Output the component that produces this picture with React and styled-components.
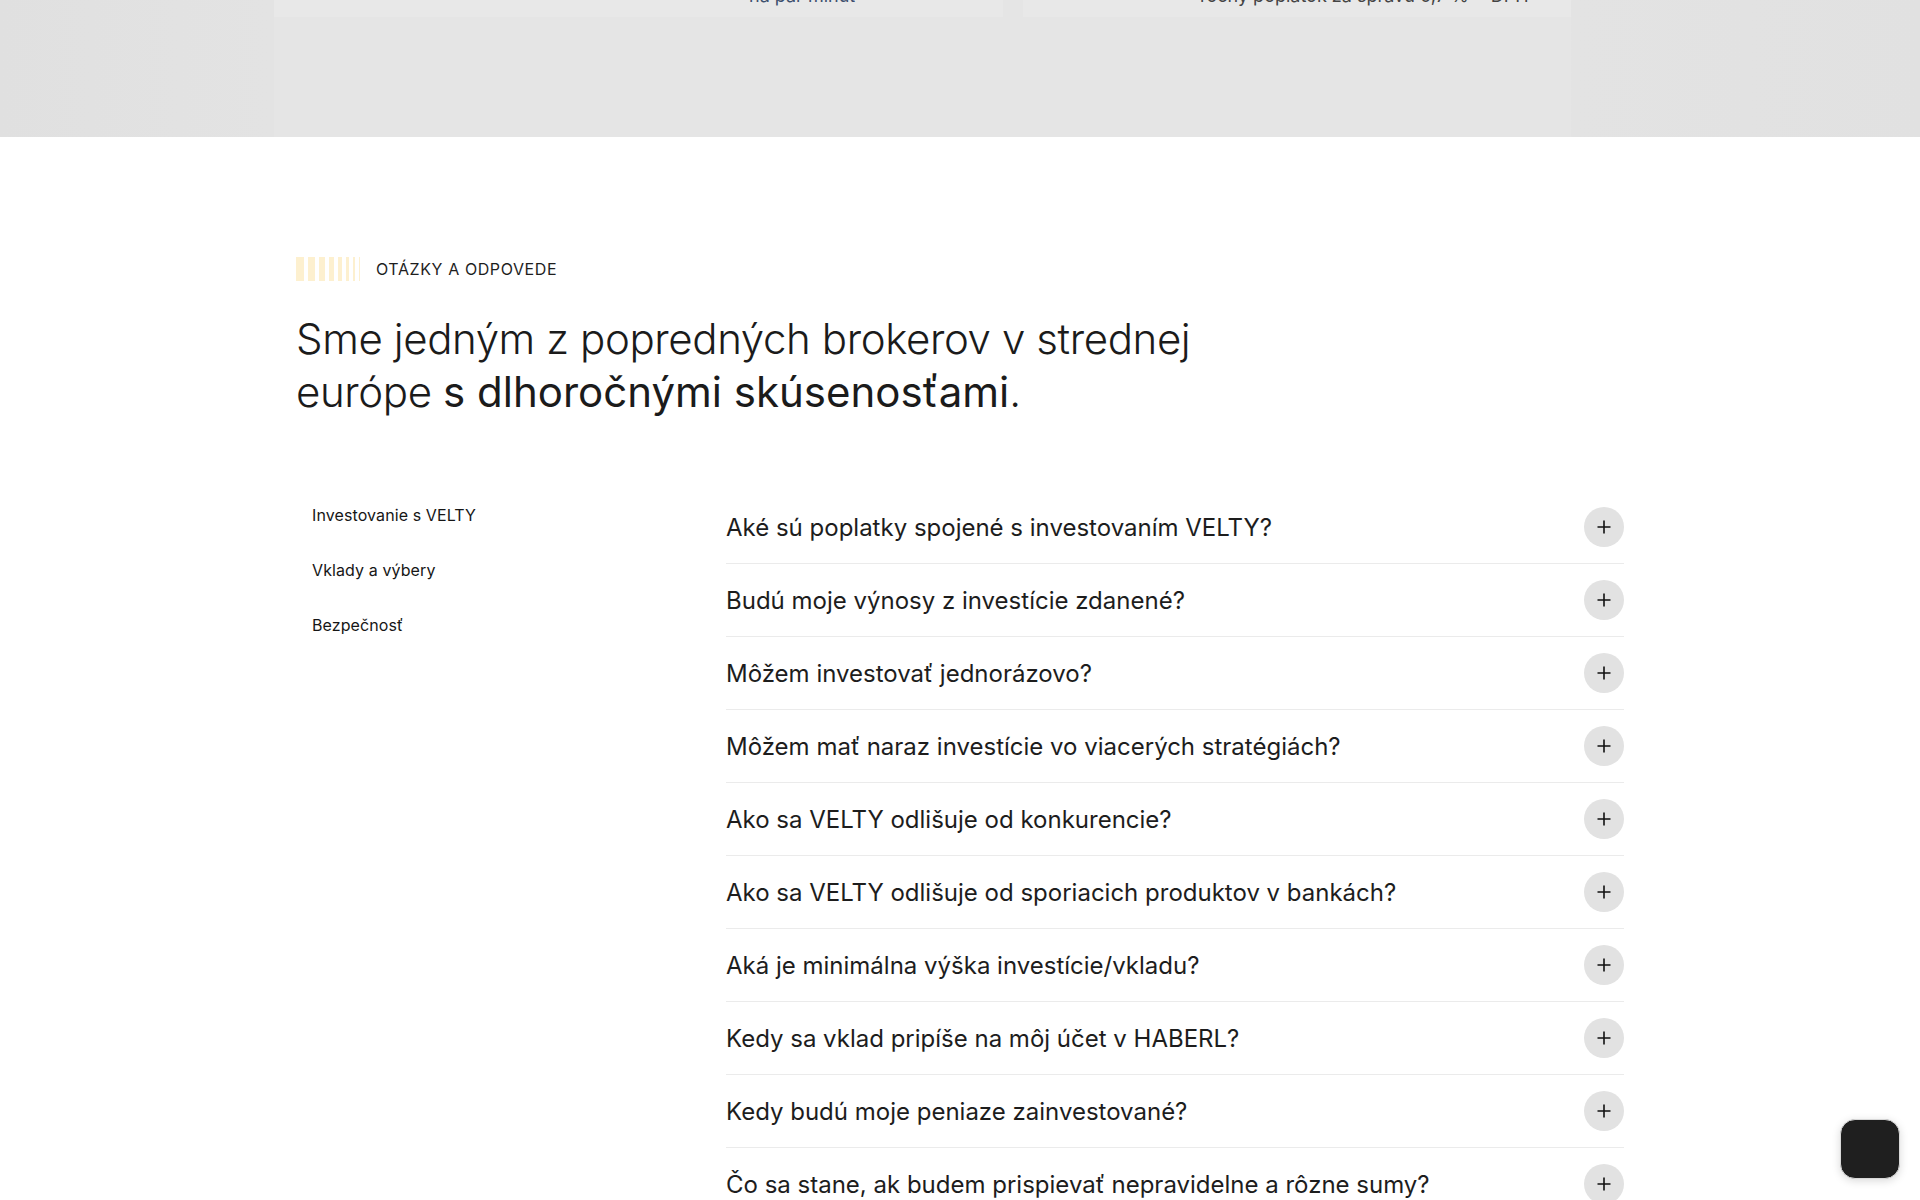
import styled, { createGlobalStyle } from 'styled-components';

const GlobalStyle = createGlobalStyle`
	html, body {
		margin: 0;
		padding: 0;
		background: #ffffff;
		font-family: Inter, "Noto Sans", sans-serif;
		color: #1b1b1b;
	}
	#root {
		height: 1200px;
		overflow: hidden;
	}
`;

const questions = [
	'Aké sú poplatky spojené s investovaním VELTY?',
	'Budú moje výnosy z investície zdanené?',
	'Môžem investovať jednorázovo?',
	'Môžem mať naraz investície vo viacerých stratégiách?',
	'Ako sa VELTY odlišuje od konkurencie?',
	'Ako sa VELTY odlišuje od sporiacich produktov v bankách?',
	'Aká je minimálna výška investície/vkladu?',
	'Kedy sa vklad pripíše na môj účet v HABERL?',
	'Kedy budú moje peniaze zainvestované?',
	'Čo sa stane, ak budem prispievať nepravidelne a rôzne sumy?',
	'Môžem si investíciu kedykoľvek vybrať?',
];

const categories = ['Investovanie s VELTY', 'Vklady a výbery', 'Bezpečnosť'];

const bars = [8, 7, 6, 5, 4, 3, 2, 1];

const TopBand = styled.div`
	height: 137px;
	background: linear-gradient(90deg, #e0e0e0 0%, #e3e3e3 14%, #e5e5e5 50%, #e3e3e3 82%, #e1e1e1 100%);
	display: flex;
	padding: 0 349px 0 274px;
`;

const BandPanel = styled.div`
	flex: 1;
	background: #e5e5e5;
	display: flex;
	gap: 20px;
	align-items: flex-start;
`;

const BandCard = styled.div`
	flex: ${(p) => (p.$grow ? 1 : 'none')};
	width: ${(p) => p.$width}px;
	height: 17px;
	background: #e8e8e8;
	overflow: hidden;
	display: flex;
	padding-left: ${(p) => p.$pad}px;
	box-sizing: border-box;

	span {
		margin-top: -14px;
		font-size: 18px;
		line-height: 20px;
		color: ${(p) => p.$color};
		white-space: nowrap;
	}
`;

const Section = styled.section`
	width: 1328px;
	margin: 0 auto;
	padding-top: 120px;
`;

const Eyebrow = styled.div`
	display: flex;
	align-items: center;
	gap: 16px;
	height: 24px;
`;

const Bars = styled.div`
	display: flex;
	gap: 4px;
	height: 24px;

	i {
		display: block;
		height: 100%;
		background: #fdf0cf;
	}
`;

const EyebrowText = styled.span`
	font-size: 16px;
	letter-spacing: 0.6px;
	color: #1e1e1e;
	text-transform: uppercase;
`;

const Heading = styled.h2`
	margin: 31px 0 0;
	font-size: 42px;
	line-height: 53px;
	font-weight: 300;
	letter-spacing: -0.4px;
	color: #1b1b1b;

	strong {
		font-weight: 400;
		letter-spacing: 0;
	}
`;

const Layout = styled.div`
	display: grid;
	grid-template-columns: 430px 1fr;
	margin-top: 73px;
`;

const Nav = styled.nav`
	display: flex;
	flex-direction: column;
	margin-top: -3px;
`;

const NavItem = styled.a`
	display: block;
	padding: 0 16px;
	line-height: 55px;
	font-size: 16px;
	letter-spacing: 0.1px;
	color: #161616;
	text-decoration: none;
	cursor: pointer;
`;

const List = styled.div`
	display: flex;
	flex-direction: column;
`;

const Row = styled.div`
	display: flex;
	align-items: center;
	justify-content: space-between;
	height: 72px;
	border-bottom: 1px solid #ebebeb;
	cursor: pointer;
`;

const Question = styled.span`
	font-size: 24px;
	letter-spacing: 0;
	color: #1d1d1d;
`;

const PlusButton = styled.button`
	width: 40px;
	height: 40px;
	border-radius: 50%;
	border: none;
	background: #e2e2e2;
	display: flex;
	align-items: center;
	justify-content: center;
	padding: 0;
	cursor: pointer;
	flex-shrink: 0;
`;

const ChatButton = styled.button`
	position: fixed;
	right: 20px;
	bottom: 21px;
	width: 60px;
	height: 60px;
	border-radius: 15px;
	background: #1f1f1f;
	border: 1px solid #d8d8d8;
	box-shadow: 0 2px 8px rgba(0, 0, 0, 0.15);
	cursor: pointer;
`;

const PlusIcon = () => (
	<svg width="14" height="14" viewBox="0 0 14 14" fill="none">
		<path d="M7 0.5v13M0.5 7h13" stroke="#111" strokeWidth="1.6" />
	</svg>
);

export default function App() {
	return (
		<>
			<GlobalStyle />
			<TopBand>
				<BandPanel>
					<BandCard $width={729} $pad={475} $color="#3d4f6e">
						<span>na pár minút</span>
					</BandCard>
					<BandCard $grow $pad={177} $color="#444">
						<span>ročný poplatok za správu 0,7 % + DPH</span>
					</BandCard>
				</BandPanel>
			</TopBand>
			<Section>
				<Eyebrow>
					<Bars>
						{bars.map((w, i) => (
							<i key={i} style={{ width: w }} />
						))}
					</Bars>
					<EyebrowText>Otázky a odpovede</EyebrowText>
				</Eyebrow>
				<Heading>
					Sme jedným z popredných brokerov v strednej
					<br />
					európe <strong>s dlhoročnými skúsenosťami</strong>.
				</Heading>
				<Layout>
					<Nav>
						{categories.map((c) => (
							<NavItem key={c}>{c}</NavItem>
						))}
					</Nav>
					<List>
						{questions.map((q) => (
							<Row key={q}>
								<Question>{q}</Question>
								<PlusButton aria-label="Rozbaliť">
									<PlusIcon />
								</PlusButton>
							</Row>
						))}
					</List>
				</Layout>
			</Section>
			<ChatButton aria-label="Chat" />
		</>
	);
}
